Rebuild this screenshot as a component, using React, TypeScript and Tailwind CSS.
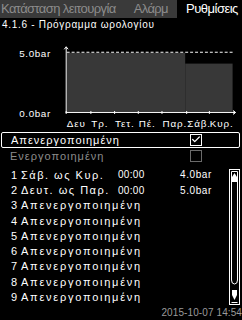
import { Check } from "lucide-react";

const ROWS = [
    { n: "1", label: "Σάβ. ως Κυρ.", time: "00:00", value: "4.0bar" },
    { n: "2", label: "Δευτ. ως Παρ.", time: "00:00", value: "5.0bar" },
    { n: "3", label: "Απενεργοποιημένη" },
    { n: "4", label: "Απενεργοποιημένη" },
    { n: "5", label: "Απενεργοποιημένη" },
    { n: "6", label: "Απενεργοποιημένη" },
    { n: "7", label: "Απενεργοποιημένη" },
    { n: "8", label: "Απενεργοποιημένη" },
    { n: "9", label: "Απενεργοποιημένη" },
];

const TICKS = [65, 90, 114, 138, 162, 187, 210, 235];
const DAYS = ["Δευ", "Τρ.", "Τετ.", "Πέ.", "Παρ.", "Σάβ.", "Κυρ."];

function Chart() {
    return (
        <svg width="242" height="100" viewBox="0 32 242 100" className="block" style={{ fontFamily: "'Liberation Sans', sans-serif" }}>
            {/* bars */}
            <rect x="66" y="53" width="120" height="60" fill="#383838" />
            <rect x="186" y="64" width="48" height="49" fill="#383838" />
            {/* 5.0 dashed limit */}
            <line x1="66" y1="52.5" x2="234" y2="52.5" stroke="#fff" strokeDasharray="3 2" />
            {/* axes */}
            <line x1="65.5" y1="47" x2="65.5" y2="114" stroke="#fff" />
            <path d="M63.5 49.5 L65.5 47 L67.5 49.5" stroke="#fff" fill="none" />
            <line x1="65" y1="113.5" x2="237" y2="113.5" stroke="#fff" />
            <path d="M234.5 111.5 L237 113.5 L234.5 115.5" stroke="#fff" fill="none" />
            {TICKS.map((x) => (
                <line key={x} x1={x + 0.5} y1="112" x2={x + 0.5} y2="115" stroke="#fff" />
            ))}
            <text x="18" y="57" fill="#fff" fontSize="10" letterSpacing="0.6">5.0bar</text>
            <text x="18" y="118" fill="#fff" fontSize="10" letterSpacing="0.6">0.0bar</text>
            {DAYS.map((d, i) => (
                <text key={d} x={TICKS[i] + 1} y="128" fill="#fff" fontSize="10" letterSpacing="0.9">{d}</text>
            ))}
        </svg>
    );
}

function ScrollBar() {
    return (
        <svg width="11" height="136" viewBox="0 0 11 136" className="block">
            <rect x="0.5" y="0.5" width="10" height="135" fill="none" stroke="#fff" />
            <path d="M2.5 2.5 H8.5 V111 Q8.5 115 5.5 115 Q2.5 115 2.5 111 Z" fill="none" stroke="#fff" />
            <path d="M5.5 4 L8 8 V13 H3 V8 Z" fill="#fff" />
            <path d="M3 121 H8 V126 L5.5 131 L3 126 Z" fill="#fff" />
            <line x1="2.5" y1="133.5" x2="8.5" y2="133.5" stroke="#fff" />
        </svg>
    );
}

export default function App() {
    return (
        <div className="w-[242px] h-[320px] bg-black text-white overflow-hidden flex flex-col" style={{ fontFamily: "'Liberation Sans', 'DejaVu Sans', sans-serif" }}>
            {/* Tabs */}
            <div className="flex h-[18px] shrink-0">
                <div className="w-[177px] bg-[#3a3a3a] flex items-center text-[13px] text-[#8c8c8c] tracking-[-0.6px]">
                    <span className="pl-[1px]">Κατάσταση λειτουργία</span>
                    <span className="ml-[18px]">Αλάρμ</span>
                </div>
                <div className="flex-1 flex items-center text-[13px] pl-[9px] tracking-[-0.5px]">Ρυθμίσεις</div>
            </div>

            <div className="h-[14px] pl-[2px] text-[10px] leading-[14px] tracking-[0.7px]">4.1.6 - Πρόγραμμα ωρολογίου</div>

            <Chart />

            {/* on/off selection */}
            <div className="mt-[1px] ml-[1px] mr-[2px] h-[16px] border border-white rounded-[2px] flex items-center text-[11px] tracking-[1px]">
                <span className="pl-[9px] flex-1">Απενεργοποιημένη</span>
                <span className="w-[12px] h-[12px] border border-white mr-[37px] flex items-center justify-center">
                    <Check size={11} strokeWidth={3} className="text-white" />
                </span>
            </div>
            <div className="ml-[1px] mr-[2px] h-[15px] mt-[1px] flex items-center text-[11px] tracking-[1px] text-[#8c8c8c]">
                <span className="pl-[9px] flex-1">Ενεργοποιημένη</span>
                <span className="w-[12px] h-[12px] border border-[#6a6a6a] mr-[38px]" />
            </div>

            {/* schedule list */}
            <div className="flex mt-[4px]">
                <div className="flex-1">
                    {ROWS.map((r) => (
                        <div key={r.n} className="flex h-[15.25px] items-center text-[11px] leading-none">
                            <span className="w-[21px] pl-[11px]">{r.n}</span>
                            {r.time ? (
                                <>
                                    <span className="w-[97px] tracking-[1.5px]">{r.label}</span>
                                    <span className="w-[62px] text-[10px] tracking-[0.3px]">{r.time}</span>
                                    <span className="text-[10px] tracking-[0.6px]">{r.value}</span>
                                </>
                            ) : (
                                <span className="tracking-[1.75px]">{r.label}</span>
                            )}
                        </div>
                    ))}
                </div>
                <div className="mr-[2px] mt-[1px]">
                    <ScrollBar />
                </div>
            </div>

            <div className="text-right text-[10px] text-[#9a9a9a] leading-[14px] mt-[1px] tracking-[0.1px]">2015-10-07 14:54</div>
        </div>
    );
}
